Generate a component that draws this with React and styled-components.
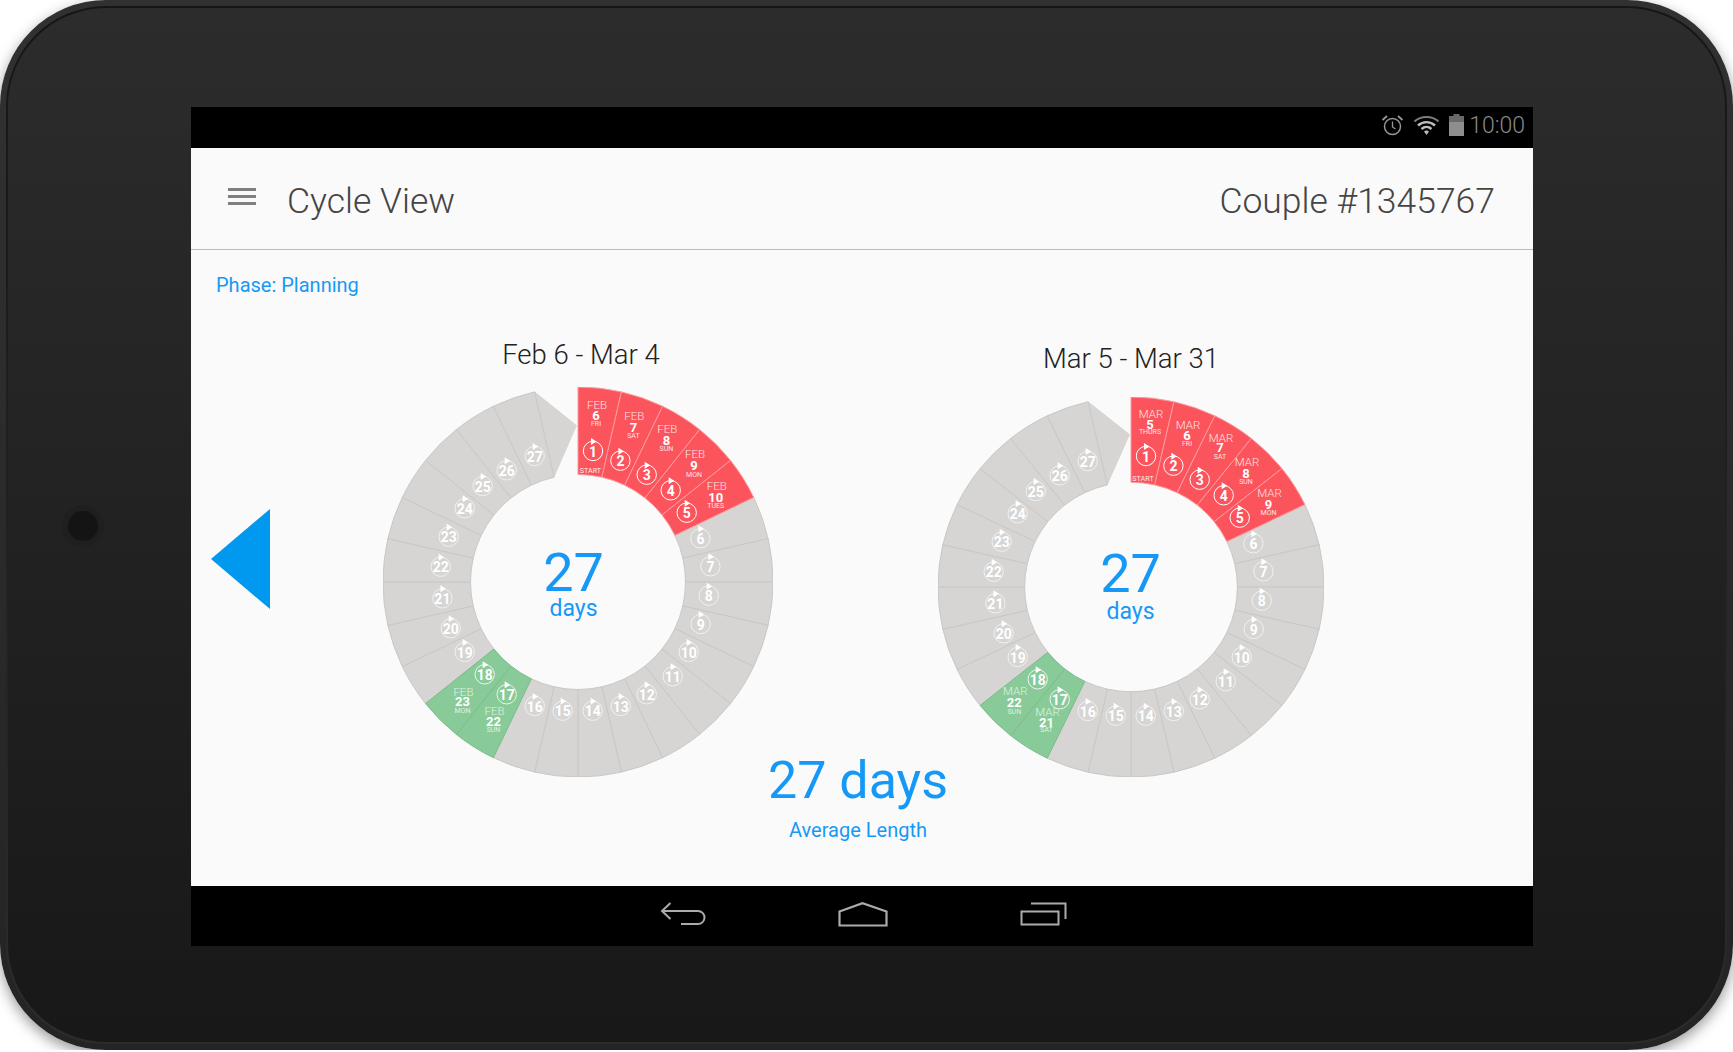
import React from "react";
import styled, { createGlobalStyle } from "styled-components";

const BLUE = "#1699f6";
const LIGHT_FONT = `"Roboto Light", Roboto, "Liberation Sans", sans-serif`;

const GlobalStyle = createGlobalStyle`
  html, body {
    margin: 0;
    background: #fff;
    overflow: hidden;
  }
  body {
    font-family: Roboto, "Liberation Sans", sans-serif;
  }
`;

const Device = styled.div`
  width: 1733px;
  height: 1050px;
  box-sizing: border-box;
  padding: 6px;
  position: relative;
  border-radius: 106px;
  background: linear-gradient(#313131, #242424);
  box-shadow: 0 5px 14px rgba(0, 0, 0, 0.4);
`;

const Face = styled.div`
  height: 100%;
  box-sizing: border-box;
  padding: 99px 0 0 183px;
  border: 2px solid transparent;
  border-radius: 100px;
  background: linear-gradient(#2c2c2c, #181818) padding-box,
    linear-gradient(#161616, #2c2c2c) border-box;
`;

const Camera = styled.div`
  position: absolute;
  left: 68px;
  top: 511px;
  width: 30px;
  height: 30px;
  border-radius: 50%;
  background: #141414;
  box-shadow: 0 0 0 6px #1f1f1f;
`;

const Screen = styled.div`
  width: 1342px;
  height: 839px;
  display: flex;
  flex-direction: column;
  background: #fafafa;
`;

const StatusBar = styled.div`
  height: 41px;
  flex: none;
  box-sizing: border-box;
  background: #000;
  display: flex;
  align-items: center;
  justify-content: flex-end;
  padding: 0 8px 5px 0;
  color: #8a8a8a;
`;

const StatusIcons = styled.div`
  display: flex;
  align-items: center;
  gap: 9px;
  margin-right: 5px;
`;

const Clock = styled.span`
  font-family: ${LIGHT_FONT};
  font-size: 23px;
  font-weight: 250;
  line-height: 1;
`;

const AppBar = styled.header`
  height: 101px;
  flex: none;
  box-sizing: content-box;
  border-bottom: 1px solid #bcbcbc;
  display: flex;
  align-items: center;
  justify-content: space-between;
  padding: 0 38px 0 37px;
`;

const NavGroup = styled.div`
  display: flex;
  align-items: center;
  gap: 31px;
`;

const Hamburger = styled.div`
  display: flex;
  flex-direction: column;
  gap: 4px;
  margin-top: -4px;
`;

const HamburgerBar = styled.span`
  display: block;
  width: 28px;
  height: 3px;
  background: #7f7f7f;
`;

const BarTitle = styled.h1`
  margin: 0;
  padding-top: 4px;
  font-family: ${LIGHT_FONT};
  font-size: 35.5px;
  font-weight: 250;
  color: #454545;
  line-height: 44px;
`;

const Content = styled.main`
  flex: 1;
  display: flex;
  flex-direction: column;
`;

const Phase = styled.div`
  margin: 23px 0 38px 25px;
  font-size: 20px;
  font-weight: 450;
  line-height: 24px;
  color: ${BLUE};
`;

const Row = styled.div`
  display: flex;
  align-items: flex-start;
  padding-left: 20px;
`;

const Arrow = styled.div`
  width: 0;
  height: 0;
  margin: 174px 113px 0 0;
  border-top: 50.5px solid transparent;
  border-bottom: 50.5px solid transparent;
  border-right: 59px solid #0099ef;
`;

const Wheels = styled.div`
  display: flex;
  gap: 165px;
`;

const WheelColumn = styled.section`
  display: flex;
  flex-direction: column;
  margin-top: ${(p) => p.$top}px;
`;

const WheelTitle = styled.div`
  margin-bottom: ${(p) => p.$gap}px;
  padding-left: ${(p) => p.$shift}px;
  font-family: ${LIGHT_FONT};
  font-size: 27.5px;
  font-weight: 250;
  line-height: 40px;
  color: #222;
  text-align: center;
`;

const Ring = styled.div`
  position: relative;
  width: ${(p) => p.$w}px;
  height: ${(p) => p.$h}px;
`;

const RingSvg = styled.svg`
  display: block;
`;

const Hub = styled.div`
  position: absolute;
  inset: 0;
  box-sizing: border-box;
  display: flex;
  flex-direction: column;
  align-items: center;
  padding: ${(p) => p.$top}px ${(p) => p.$right}px 0 0;
  color: ${BLUE};
`;

const HubNumber = styled.div`
  font-size: 54px;
  font-weight: 400;
  line-height: 54px;
`;

const HubUnit = styled.div`
  margin-top: ${(p) => p.$gap}px;
  font-size: 23px;
  font-weight: 450;
  line-height: 24px;
`;

const Summary = styled.div`
  margin-top: -26px;
  padding-right: 8px;
  text-align: center;
  color: ${BLUE};
  position: relative;
`;

const SummaryValue = styled.div`
  font-size: 52px;
  font-weight: 450;
  line-height: 60px;
`;

const SummaryLabel = styled.div`
  margin-top: 7px;
  font-size: 20px;
  font-weight: 450;
  line-height: 24px;
`;

const NavBar = styled.nav`
  height: 60px;
  flex: none;
  background: #000;
  display: flex;
  align-items: center;
  justify-content: center;
  gap: 132px;
  padding: 0 0 4px 2px;
  box-sizing: border-box;
`;

const Slice = styled.path`
  fill: ${(p) => p.$fill};
  stroke: ${(p) => p.$line};
  stroke-width: 1;
`;

const MonthText = styled.text`
  font-family: ${LIGHT_FONT};
  font-size: 11.5px;
  font-weight: 300;
  fill: ${(p) => (p.$green ? "#dff2e4" : "#fde3e3")};
  text-anchor: middle;
  dominant-baseline: central;
`;

const DayText = styled.text`
  font-size: 13px;
  font-weight: 700;
  fill: #fff;
  text-anchor: middle;
  dominant-baseline: central;
`;

const WeekdayText = styled.text`
  font-size: 7px;
  fill: ${(p) => (p.$green ? "#dff2e4" : "#fde3e3")};
  text-anchor: middle;
  dominant-baseline: central;
`;

const StartText = styled.text`
  font-size: 7.2px;
  fill: #fdeaea;
  text-anchor: middle;
  dominant-baseline: central;
`;

const BadgeCircle = styled.circle`
  fill: none;
  stroke: ${(p) => (p.$strong ? "#fff" : "#f1f1f0")};
  stroke-width: 1;
`;

const BadgeNumber = styled.text`
  font-size: 14px;
  font-weight: 700;
  fill: #fff;
  text-anchor: middle;
  dominant-baseline: central;
`;

const STEP = 360 / 28;
const OUTER = 195;
const INNER = 107.5;

const BADGES = [
  [15, -131], [42.4, -121.3], [68.7, -107.3], [92.7, -91.7], [108.7, -69.3],
  [122.4, -43.7], [132.4, -15.7], [130.7, 13.7], [122.7, 42], [110.7, 70],
  [94.7, 94.3], [68.7, 112.3], [42.7, 124], [14.7, 128.7], [-15.3, 128.7],
  [-43.3, 124], [-71.3, 112.3], [-93.3, 92.3], [-113.3, 70], [-127.3, 46.3],
  [-135.6, 16.3], [-137.3, -15.3], [-129.3, -45.3], [-113.3, -73.7],
  [-95.3, -96], [-71.3, -111.7], [-43.3, -126],
];

const FIRST_WHEEL = {
  title: "Feb 6 - Mar 4",
  w: 390,
  h: 390,
  top: 0,
  gap: 12,
  shift: 6,
  hub: { top: 159, right: 9, unitGap: -3 },
  start: [12.4, -111.3],
  dates: [
    { month: "FEB", day: "6", weekday: "FRI", mx: 19, my: -177, dy: -166.3, wy: -158 },
    { month: "FEB", day: "7", weekday: "SAT", mx: 56.4, my: -165.7, dy: -154.7, wy: -146 },
    { month: "FEB", day: "8", weekday: "SUN", mx: 89.4, my: -152.7, dy: -142, wy: -132.7 },
    { month: "FEB", day: "9", weekday: "MON", mx: 117, my: -127.7, dy: -116.3, wy: -107 },
    { month: "FEB", day: "10", weekday: "TUES", mx: 138.7, my: -96.3, dy: -84.3, wy: -75.7 },
    { month: "FEB", day: "23", weekday: "MON", mx: -114.6, my: 109.7, dy: 119.7, wy: 128.7, green: true },
    { month: "FEB", day: "22", weekday: "SUN", mx: -83.5, my: 129.3, dy: 139.7, wy: 148, green: true },
  ],
};

const SECOND_WHEEL = {
  title: "Mar 5 - Mar 31",
  w: 386,
  h: 380,
  top: 4,
  gap: 18,
  shift: 0,
  hub: { top: 150, right: 1, unitGap: -1 },
  start: [12, -109],
  dates: [
    { month: "MAR", day: "5", weekday: "THURS", mx: 20, my: -173.4, dy: -162.7, wy: -154.7 },
    { month: "MAR", day: "6", weekday: "FRI", mx: 57, my: -162, dy: -151.4, wy: -142.7 },
    { month: "MAR", day: "7", weekday: "SAT", mx: 90, my: -149.4, dy: -139.4, wy: -130 },
    { month: "MAR", day: "8", weekday: "SUN", mx: 116, my: -124.7, dy: -114, wy: -104.7 },
    { month: "MAR", day: "9", weekday: "MON", mx: 138.5, my: -94, dy: -82.7, wy: -74 },
    { month: "MAR", day: "22", weekday: "SUN", mx: -115.7, my: 104, dy: 115, wy: 125, green: true },
    { month: "MAR", day: "21", weekday: "SAT", mx: -83.5, my: 125, dy: 135, wy: 143, green: true },
  ],
};

const sliceStyle = (i) => {
  if (i < 5) return { fill: "#fb545c", line: "#fb9a9e" };
  if (i === 16 || i === 17) return { fill: "#88cb98", line: "#7cbc8c" };
  return { fill: "#d6d5d3", line: "#c9c8c6" };
};

const slicePath = (i, sx, sy) => {
  const a = (i * STEP * Math.PI) / 180;
  const b = ((i + 1) * STEP * Math.PI) / 180;
  const pt = (r, t) => `${(r * sx * Math.sin(t)).toFixed(2)} ${(-r * sy * Math.cos(t)).toFixed(2)}`;
  return [
    `M${pt(OUTER, a)}`,
    `A${OUTER * sx} ${OUTER * sy} 0 0 1 ${pt(OUTER, b)}`,
    `L${pt(INNER, b)}`,
    `A${INNER * sx} ${INNER * sy} 0 0 0 ${pt(INNER, a)}Z`,
  ].join(" ");
};

const Badge = ({ n, x, y, strong }) => (
  <g transform={`translate(${x} ${y})`}>
    <BadgeCircle r="9.7" $strong={strong} />
    <polygon points="-2,-13 3.5,-9.5 -2,-6" fill="#fff" />
    <BadgeNumber y="0.5">{n}</BadgeNumber>
  </g>
);

const Wheel = ({ data }) => {
  const sx = data.w / 2 / OUTER;
  const sy = data.h / 2 / OUTER;
  const notch = `M${-43.4 * sx} ${-190 * sy}L${-1.6 * sx} ${-156.5 * sy}L${-24 * sx} ${-105.3 * sy}Z`;
  const order = [...Array(27).keys()].filter((i) => i >= 5 && i !== 16 && i !== 17);
  return (
    <WheelColumn $top={data.top}>
      <WheelTitle $gap={data.gap} $shift={data.shift}>{data.title}</WheelTitle>
      <Ring $w={data.w} $h={data.h}>
        <RingSvg
          width={data.w}
          height={data.h}
          viewBox={`${-data.w / 2} ${-data.h / 2} ${data.w} ${data.h}`}
        >
          <Slice d={notch} $fill="#d6d5d3" $line="#d6d5d3" />
          {[...order, 16, 17, 0, 1, 2, 3, 4].map((i) => {
            const s = sliceStyle(i);
            return <Slice key={i} d={slicePath(i, sx, sy)} $fill={s.fill} $line={s.line} />;
          })}
          <StartText x={data.start[0]} y={data.start[1]}>START</StartText>
          {data.dates.map((d) => (
            <g key={d.day}>
              <MonthText x={d.mx} y={d.my} $green={d.green}>{d.month}</MonthText>
              <DayText x={d.mx - 1} y={d.dy}>{d.day}</DayText>
              <WeekdayText x={d.mx - 1} y={d.wy} $green={d.green}>{d.weekday}</WeekdayText>
            </g>
          ))}
          {BADGES.map(([x, y], i) => (
            <Badge key={i} n={i + 1} x={x} y={y} strong={i < 5} />
          ))}
        </RingSvg>
        <Hub $top={data.hub.top} $right={data.hub.right}>
          <HubNumber>27</HubNumber>
          <HubUnit $gap={data.hub.unitGap}>days</HubUnit>
        </Hub>
      </Ring>
    </WheelColumn>
  );
};

const AlarmIcon = () => (
  <svg width="23" height="23" viewBox="0 0 23 23" fill="none" stroke="#969696">
    <circle cx="11.5" cy="12.5" r="8" strokeWidth="1.5" />
    <path d="M11.5 7.5v5.5l3 2" strokeWidth="1.3" />
    <path d="M1.5 6 6 2M21.5 6 17 2" strokeWidth="1.8" />
  </svg>
);

const WifiIcon = () => (
  <svg width="27" height="22" viewBox="0 0 27 22" fill="none">
    <path d="M1.5 7.5C8 1.5 19 1.5 25.5 7.5" stroke="#7d7d7d" strokeWidth="2.2" />
    <path d="M5 11.5c5-4.5 12-4.5 17 0" stroke="#bdbdbd" strokeWidth="2.4" />
    <path d="M8.5 15c3-2.8 7-2.8 10 0" stroke="#bdbdbd" strokeWidth="2.4" />
    <path d="M11 17.5c1.5-1.2 3.5-1.2 5 0L13.5 21Z" fill="#bdbdbd" />
  </svg>
);

const BatteryIcon = () => (
  <svg width="15" height="22" viewBox="0 0 15 22">
    <rect x="4.5" y="0" width="6" height="3" fill="#666" />
    <rect x="0" y="2" width="15" height="6" fill="#6a6a6a" />
    <rect x="0" y="8" width="15" height="14" fill="#8e8e8e" />
  </svg>
);

const BackIcon = () => (
  <svg width="46" height="24" viewBox="0 0 46 24" fill="none" stroke="#ababab" strokeWidth="2">
    <path d="M10.5 1 2 9l8.5 8" />
    <path d="M2 9h36a6.5 6.5 0 0 1 0 13H21" />
  </svg>
);

const HomeIcon = () => (
  <svg width="50" height="25" viewBox="0 0 50 25" fill="none" stroke="#ababab" strokeWidth="2.2">
    <path d="M1.5 23.5V9.5L24.5 1.2 48.5 9.5V23.5Z" />
  </svg>
);

const RecentIcon = () => (
  <svg width="47" height="24" viewBox="0 0 47 24" fill="none" stroke="#ababab" strokeWidth="2">
    <path d="M11 1.5H45.5V17" />
    <path d="M1.5 9.5H38.5V22.5H1.5Z" />
  </svg>
);

const App = () => {
  return (
    <Device>
      <GlobalStyle />
      <Camera />
      <Face>
        <Screen>
          <StatusBar>
            <StatusIcons>
              <AlarmIcon />
              <WifiIcon />
              <BatteryIcon />
            </StatusIcons>
            <Clock>10:00</Clock>
          </StatusBar>
          <AppBar>
            <NavGroup>
              <Hamburger>
                <HamburgerBar />
                <HamburgerBar />
                <HamburgerBar />
              </Hamburger>
              <BarTitle>Cycle View</BarTitle>
            </NavGroup>
            <BarTitle>Couple #1345767</BarTitle>
          </AppBar>
          <Content>
            <Phase>Phase: Planning</Phase>
            <Row>
              <Arrow />
              <Wheels>
                <Wheel data={FIRST_WHEEL} />
                <Wheel data={SECOND_WHEEL} />
              </Wheels>
            </Row>
            <Summary>
              <SummaryValue>27 days</SummaryValue>
              <SummaryLabel>Average Length</SummaryLabel>
            </Summary>
          </Content>
          <NavBar>
            <BackIcon />
            <HomeIcon />
            <RecentIcon />
          </NavBar>
        </Screen>
      </Face>
    </Device>
  );
};

export default App;
